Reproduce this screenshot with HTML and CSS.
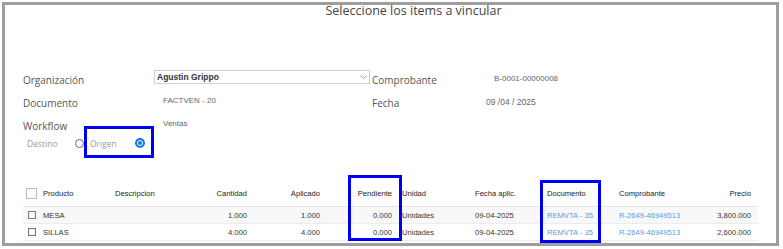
FILE: index.html
```html
<!DOCTYPE html>
<html lang="es">
<head>
    <meta charset="UTF-8">
    <meta name="viewport" content="width=device-width, initial-scale=1.0">
    <title>Seleccione los items a vincular</title>
    <link rel="stylesheet" href="styles.css">
</head>
<body>
    <div class="frame">
        <h1 class="title">Seleccione los items a vincular</h1>

        <div class="form">
            <div class="label">Organización</div>
            <div class="field">
                <div class="select">
                    <span>Agustin Grippo</span>
                    <svg class="chevron" width="7" height="4" viewBox="0 0 7 4"><path d="M0.5 0.5 L3.5 3.5 L6.5 0.5" fill="none" stroke="#7aa7dc" stroke-width="1"/></svg>
                </div>
            </div>
            <div class="label">Comprobante</div>
            <div class="value value-comp">B-0001-00000008</div>

            <div class="label">Documento</div>
            <div class="value value-doc">FACTVEN - 20</div>
            <div class="label">Fecha</div>
            <div class="value value-date">09 /04 / 2025</div>

            <div class="label">Workflow</div>
            <div class="value value-doc">Ventas</div>
            <div></div>
            <div></div>
        </div>

        <div class="radios">
            <span class="radio-label destino">Destino</span>
            <span class="radio"></span>
            <span class="radio-label origen">Origen</span>
            <span class="radio checked"></span>
            <div class="mark mark-origen"></div>
        </div>

        <div class="table-wrap">
            <table class="items">
                <colgroup>
                    <col style="width: 15px">
                    <col style="width: 72px">
                    <col style="width: 70px">
                    <col style="width: 72px">
                    <col style="width: 73px">
                    <col style="width: 72px">
                    <col style="width: 73px">
                    <col style="width: 72px">
                    <col style="width: 72px">
                    <col style="width: 72px">
                    <col style="width: 72px">
                </colgroup>
                <thead>
                    <tr>
                        <th class="chk-cell"><span class="chk chk-head"></span></th>
                        <th>Producto</th>
                        <th>Descripcion</th>
                        <th class="num">Cantidad</th>
                        <th class="num">Aplicado</th>
                        <th class="num">Pendiente</th>
                        <th>Unidad</th>
                        <th>Fecha aplic.</th>
                        <th>Documento</th>
                        <th>Comprobante</th>
                        <th class="num last">Precio</th>
                    </tr>
                </thead>
                <tbody>
                    <tr class="odd">
                        <td class="chk-cell"><span class="chk"></span></td>
                        <td>MESA</td>
                        <td></td>
                        <td class="num">1.000</td>
                        <td class="num">1.000</td>
                        <td class="num">0.000</td>
                        <td>Unidades</td>
                        <td>09-04-2025</td>
                        <td class="link">REMVTA - 35</td>
                        <td class="link">R-2649-46949513</td>
                        <td class="num last">3,800.000</td>
                    </tr>
                    <tr>
                        <td class="chk-cell"><span class="chk"></span></td>
                        <td>SILLAS</td>
                        <td></td>
                        <td class="num">4.000</td>
                        <td class="num">4.000</td>
                        <td class="num">0.000</td>
                        <td>Unidades</td>
                        <td>09-04-2025</td>
                        <td class="link">REMVTA - 35</td>
                        <td class="link">R-2649-46949513</td>
                        <td class="num last">2,600.000</td>
                    </tr>
                </tbody>
            </table>
            <div class="mark mark-pendiente"></div>
            <div class="mark mark-documento"></div>
        </div>
    </div>
</body>
</html>
```

FILE: styles.css
```css
body {
    margin: 0;
    padding: 2px 4px 2px 2px;
    font-family: "Open Sans", "Liberation Sans", sans-serif;
    background: #fff;
}
.frame {
    box-sizing: border-box;
    width: 777px;
    height: 244px;
    border: 3px solid #9e9e9e;
    background: #fff;
    position: relative;
}
.title {
    margin: 0;
    padding: 0 0 0 46px;
    height: 16px;
    line-height: 12px;
    font-size: 12.5px;
    font-weight: 400;
    color: #444;
    text-align: center;
}

/* form */
.form {
    display: grid;
    grid-template-columns: 131px 218px 114px auto;
    grid-auto-rows: 23px;
    align-items: center;
    margin: 46px 0 0 18px;
}
.label {
    font-size: 10px;
    color: #555;
    padding-top: 3px;
}
.value {
    font-family: "Liberation Sans", Arial, sans-serif;
    font-size: 8px;
    color: #666;
}
.value-doc {
    padding-left: 9px;
    margin-top: -2px;
}
.value-comp {
    padding-left: 8px;
    margin-top: -1px;
}
.value-date {
    font-size: 8.5px;
}
.select {
    box-sizing: border-box;
    width: 216px;
    height: 14px;
    border: 1px solid #cfcfcf;
    display: flex;
    align-items: center;
    justify-content: space-between;
    padding: 0 2px 0 2px;
    margin-top: -3px;
    font-family: "Liberation Sans", Arial, sans-serif;
    font-size: 8.5px;
    font-weight: 600;
    color: #333;
}
.chevron {
    display: block;
}

/* radios */
.radios {
    position: relative;
    display: flex;
    align-items: center;
    height: 14px;
    margin: 0 0 0 22px;
}
.radio-label {
    font-size: 8.5px;
    color: #9a9a9a;
}
.destino {
    width: 48px;
}
.origen {
    width: 45px;
    margin-left: 6px;
}
.radio {
    box-sizing: border-box;
    width: 9px;
    height: 9px;
    border-radius: 50%;
    border: 1px solid #666;
    background: #fff;
}
.radio.checked {
    width: 10px;
    height: 10px;
    border: 2px solid #1a73e8;
    box-shadow: inset 0 0 0 1px #fff;
    background: #1a73e8;
}

/* table */
.table-wrap {
    position: relative;
    margin: 30px 0 0 18px;
}
.items {
    table-layout: fixed;
    width: 735px;
    border-collapse: collapse;
    font-family: "Liberation Sans", Arial, sans-serif;
    font-size: 7.6px;
    color: #333;
}
.items th {
    height: 26px;
    font-weight: 400;
    text-align: left;
    padding: 0 5px;
    border-bottom: 1px solid #e6e6e6;
    color: #222;
}
.items td {
    height: 16px;
    padding: 0 5px;
    border-bottom: 1px solid #ececec;
}
.items tr.odd td {
    background: #f8f8f8;
}
.items .num {
    text-align: right;
}
.items .last {
    padding-right: 7px;
}
.items .chk-cell {
    padding: 0 0 0 3px;
}
.items .link {
    color: #5b9be0;
}
.chk {
    display: block;
    box-sizing: border-box;
    width: 8px;
    height: 8px;
    border: 1px solid #777;
    margin-left: 2px;
}
.chk.chk-head {
    width: 11px;
    height: 11px;
    border-color: #bbb;
    margin-left: 0;
}

/* highlight marks */
.mark {
    position: absolute;
    box-sizing: border-box;
    border: 3px solid #0000ee;
}
.mark-origen {
    left: 57px;
    top: -10px;
    width: 70px;
    height: 32px;
}
.mark-pendiente {
    left: 325px;
    top: -5px;
    width: 54px;
    height: 66px;
}
.mark-documento {
    left: 517px;
    top: 0;
    width: 61px;
    height: 63px;
}
```
